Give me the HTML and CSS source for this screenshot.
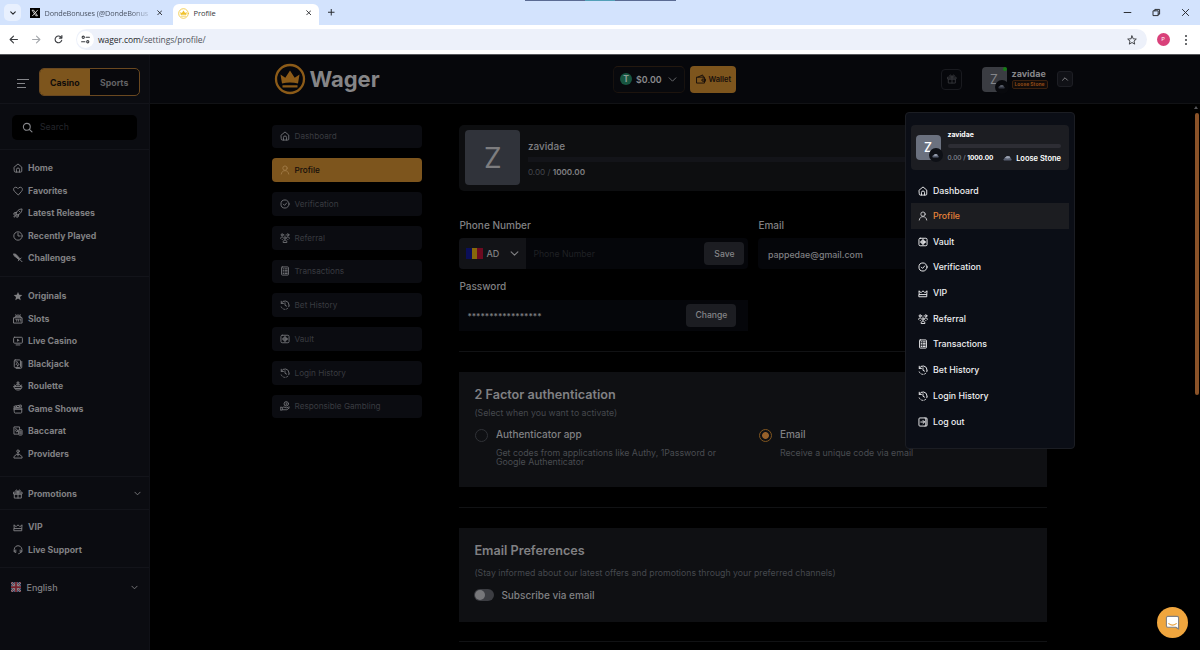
FILE: index.html
```html
<!DOCTYPE html>
<html lang="en">
<head>
  <meta charset="UTF-8" />
  <meta name="viewport" content="width=device-width, initial-scale=1.0" />
  <title>Profile</title>
  <link rel="stylesheet" href="styles.css">
</head>
<body>
  <!-- icon set -->
  <svg class="sprite" aria-hidden="true">
    <symbol id="i-home" viewBox="0 0 16 16"><path d="M2 6.500 8 1.500l6 5V13a1.500 1.500 0 0 1-1.500 1.500h-9A1.500 1.500 0 0 1 2 13z"/><path d="M5.500 14.500V10.500a2.500 2.500 0 0 1 5 0v4"/></symbol>
    <symbol id="i-heart" viewBox="0 0 16 16"><path d="M8 14 2 8.200C-.3 5.500 1.200 2 4.300 2 6 2 7.300 3 8 4.200 8.700 3 10 2 11.700 2c3.100 0 4.600 3.500 2.300 6.200z"/></symbol>
    <symbol id="i-rocket" viewBox="0 0 16 16"><path d="M5 9c1-4 4-7.500 9.500-7.500C14.500 7 11 10 7 11zM5.500 7 2 7.500l-1 2.500 3.500-.5M9 10.500 8.500 14 6 15l.5-3.500M4 11.500c-1.500 0-2.500 1.500-2.500 3 1.500 0 3-1 3-2.500M10 5l1 1"/></symbol>
    <symbol id="i-clock" viewBox="0 0 16 16"><circle cx="8" cy="8" r="6.700"/><path d="M8 3.500V8h3.500"/></symbol>
    <symbol id="i-sword" viewBox="0 0 16 16"><path fill="currentColor" d="M1.500 1.500 4.500 2l6.500 7-1.500 1.500L2 4.500z"/><path d="M8.500 12.500 13 8M11 10.500l3.500 3.500"/></symbol>
    <symbol id="i-star" viewBox="0 0 16 16"><path fill="currentColor" stroke="none" d="m8 1.500 2 4.600 4.900.4-3.700 3.200 1.100 4.900L8 12l-4.300 2.600 1.100-4.900L1.100 6.500 6 6.100z"/></symbol>
    <symbol id="i-slots" viewBox="0 0 16 16"><path d="M1.500 6h13v8.500h-13zM3 6l1-2.500h8L13 6M4.500 8.500h1.500v3M7.500 8.500H9v3M11 8.500h1.500v3M5.500 3.500 4.500 1M8 3.500V1M10.500 3.500l1-2.500"/></symbol>
    <symbol id="i-live" viewBox="0 0 16 16"><rect x="1" y="2" width="14" height="9.500" rx="1.500"/><path d="M5 14.300h6"/><path fill="currentColor" stroke="none" d="m6.500 4.200 4 2.500-4 2.600z"/></symbol>
    <symbol id="i-cards" viewBox="0 0 16 16"><rect x="2" y="1.500" width="10" height="12" rx="1.500"/><path d="M14 4v9a2 2 0 0 1-2 2H5M4.500 4.500h2M5 9c0-2 2-2.200 2-3.500C7 6.800 9.500 7 9.500 9c0 1.200-1.700 1.300-2.200.5L7 11.500"/></symbol>
    <symbol id="i-roulette" viewBox="0 0 16 16"><path d="M1.500 9h13c-.5 3.500-3 5.500-6.500 5.500S2 12.500 1.500 9zM4 9c0-3 2-4 4-4s4 1 4 4M8 1v7M6 3h4M2 6.500l2 1M14 6.500l-2 1M4 12h8"/></symbol>
    <symbol id="i-clap" viewBox="0 0 16 16"><path d="M2 6.500h12V13a1.500 1.500 0 0 1-1.500 1.500h-9A1.500 1.500 0 0 1 2 13zM2 6 1.500 3.800 13 1.500l.5 2.300zM5 3.200l1.500 2M9 2.400l1.500 2M2 8.500h12"/></symbol>
    <symbol id="i-bacc" viewBox="0 0 16 16"><path d="M7.500 13H1.500V1.500h9V4M4 4.500h1M6.500 6 8 8 6 9.500 4.500 8z"/><rect x="9" y="6" width="5.500" height="8.500" rx="1"/><path d="M11 8v4.500M12.700 8v4.500"/></symbol>
    <symbol id="i-joy" viewBox="0 0 16 16"><circle cx="8" cy="3.500" r="2"/><path d="M8 5.500V11M4 10.500H3.500L1.500 12v2.500h13V12l-2-1.500H12M5 8.500h6"/></symbol>
    <symbol id="i-gift" viewBox="0 0 16 16"><path d="M1.500 5h13v3h-13zM2.700 8h10.600v6.500H2.700zM8 5v9.500M8 5C6 5 4 4.200 4.300 2.600 4.700 1 7.300 1.300 8 5c.7-3.700 3.300-4 3.700-2.400C12 4.200 10 5 8 5"/></symbol>
    <symbol id="i-crown" viewBox="0 0 16 16"><path d="M2 10.500 1.500 4.500 5 7.500l3-3 3 3 3.500-3-.5 6M2 10.500h12V14H2z"/></symbol>
    <symbol id="i-support" viewBox="0 0 16 16"><path d="M2.500 10.500a6.300 6.300 0 1 1 11 0c-.7 1.700-2 3-4.500 3.500M4.500 8v4C2.500 12 1.500 11 1.500 9.500M11.500 8v4c2 0 3-1 3-2.500"/></symbol>
    <symbol id="i-user" viewBox="0 0 16 16"><circle cx="8" cy="5" r="3.500"/><path d="M2 14.500c.5-3.500 3-5.500 6-5.500s5.500 2 6 5.500"/></symbol>
    <symbol id="i-check" viewBox="0 0 16 16"><circle cx="8" cy="8" r="6.500"/><path d="m5.300 8.200 2 2 3.500-4"/></symbol>
    <symbol id="i-ref" viewBox="0 0 16 16"><circle cx="3.500" cy="3" r="1.700"/><circle cx="12.500" cy="3" r="1.700"/><circle cx="8" cy="8" r="1.900"/><path d="M1 8.500C1 6.500 2.500 6 4.500 6.500M15 8.500c0-2-1.500-2.500-3.500-2M5 14.500c0-2 1-3 3-3s3 1 3 3zM8 3.300h.1M3.500 10.500h.1M12.500 10.500h.1"/></symbol>
    <symbol id="i-list" viewBox="0 0 16 16"><rect x="2.500" y="1.500" width="11" height="13" rx="1"/><path d="M5 4.500h1M8 4.500h3.500M5 7h1M8 7h3.500M5 9.500h1M8 9.500h3.500M5 12h1M8 12h3.500"/></symbol>
    <symbol id="i-hist" viewBox="0 0 16 16"><path d="M2 5.500A6.500 6.500 0 0 1 14.500 8M2 2v3.500h3.500M8 4.500V8.500l2.500 1.300"/><path stroke-dasharray="2.200 2.800" d="M14.500 8.500a6.500 6.500 0 0 1-13 0"/></symbol>
    <symbol id="i-vault" viewBox="0 0 16 16"><rect x="1.500" y="2" width="13" height="12" rx="2"/><circle cx="8" cy="8" r="3"/><circle cx="8" cy="8" r="1" fill="currentColor"/><path d="M8 3.700V5M8 11v1.300M3.700 8H5M11 8h1.300"/></symbol>
    <symbol id="i-resp" viewBox="0 0 16 16"><circle cx="10" cy="4.500" r="3.500"/><path d="M10 3v3M1 10h2.500v4.500H1zM4 11l2-1.500 4 1.500 4.500-1.500M4 14h7l4-3"/></symbol>
    <symbol id="i-out" viewBox="0 0 16 16"><path d="M10 14.500H3A1.500 1.500 0 0 1 1.500 13V3A1.500 1.500 0 0 1 3 1.500h7M4.500 8h6M8 5.500 10.500 8 8 10.500M10.500 1.500h2.500A1.500 1.500 0 0 1 14.500 3v10a1.500 1.500 0 0 1-1.500 1.500h-2.500M12.500 2v12"/></symbol>
    <symbol id="i-down" viewBox="0 0 16 16"><path d="m2 5 6 6 6-6"/></symbol>
    <symbol id="i-up" viewBox="0 0 16 16"><path d="m3 10.500 5-5 5 5"/></symbol>
    <symbol id="i-x" viewBox="0 0 16 16"><path d="m2 2 12 12M14 2 2 14"/></symbol>
    <symbol id="i-search" viewBox="0 0 16 16"><circle cx="7" cy="7" r="5"/><path d="m11 11 3.500 3.500"/></symbol>
    <symbol id="i-stone" viewBox="0 0 16 10"><path d="M.5 8 3 4.500 7 1.500 11.500 2 15.500 7.500 14.500 9.500 2 9.500z" fill="#596072" stroke="none"/><path d="M3 4.800 7 1.500l4.500.5 1.500 3-5 1z" fill="#99a0af" stroke="none"/></symbol>
    <symbol id="i-logo" viewBox="0 0 32 32"><circle cx="16" cy="16" r="14" stroke-width="2.300"/><path fill="currentColor" stroke="none" d="m6.500 11.500 4.800 3.300L16 7.500l4.700 7.300 4.800-3.300L24 20.500c-5-1.300-11-1.300-16 0zM8.500 22.300h15v2.300h-15z"/></symbol>
  </svg>

  <div class="browser">
    <div class="tabstrip">
      <span class="tab-search"><svg class="ic"><use href="#i-down"/></svg></span>
      <div class="tab tab-x">
        <span class="favicon-x"><svg viewBox="0 0 16 16"><path d="M3 2.500h2.500l7.500 11h-2.500zM13 2.500l-4.300 5M7.300 8.800 3 13.500"/></svg></span>
        <span class="tab-title">DondeBonuses (@DondeBonus</span>
        <svg class="ic close"><use href="#i-x"/></svg>
      </div>
      <div class="tab tab-active">
        <svg class="favicon-w" viewBox="0 0 32 32"><use href="#i-logo"/></svg>
        <span class="tab-title">Profile</span>
        <svg class="ic close"><use href="#i-x"/></svg>
      </div>
      <svg class="plus" viewBox="0 0 16 16"><path d="M8 1v14M1 8h14"/></svg>
      <span class="top-strip"></span>
      <div class="win-controls">
        <svg viewBox="0 0 16 16"><path d="M2 8h12"/></svg>
        <svg viewBox="0 0 16 16"><path d="M2.500 5h8.500v8.500H2.500zM5 5V2.500h8.500V11H11"/></svg>
        <svg viewBox="0 0 16 16"><path d="m2.500 2.500 11 11M13.500 2.500l-11 11"/></svg>
      </div>
    </div>
    <div class="toolbar">
      <svg viewBox="0 0 16 16"><path d="M15 8H2M8 2 2 8l6 6"/></svg>
      <svg class="off" viewBox="0 0 16 16"><path d="M1 8h13M8 2l6 6-6 6"/></svg>
      <svg viewBox="0 0 16 16"><path d="M13.700 9.500A6 6 0 1 1 13 4.500M14 1v4.500H9.500"/></svg>
      <div class="address">
        <span class="site-info"><svg viewBox="0 0 16 16"><path d="M9 4h6M1 12h6"/><circle cx="4" cy="4" r="2"/><circle cx="12" cy="12" r="2"/></svg></span>
        <span class="url">wager.com<i>/settings/profile/</i></span>
        <svg class="fav" viewBox="0 0 16 16"><path d="m8 1.500 2 4.600 4.900.4-3.700 3.200 1.100 4.900L8 12l-4.300 2.600 1.100-4.900L1.100 6.500 6 6.100z"/></svg>
      </div>
      <span class="me">P</span>
      <span class="dots"><b></b><b></b><b></b></span>
    </div>
  </div>

  <div class="page">
    <aside class="sidebar">
      <div class="side-top">
        <span class="burger"><b></b><b></b><b></b></span>
        <div class="switch"><span class="on">Casino</span><span>Sports</span></div>
      </div>
      <div class="side-search">
        <div class="search-box"><svg class="ic"><use href="#i-search"/></svg><span>Search</span></div>
      </div>
      <nav class="side-group first">
        <a><svg class="ic"><use href="#i-home"/></svg>Home</a>
        <a><svg class="ic"><use href="#i-heart"/></svg>Favorites</a>
        <a><svg class="ic"><use href="#i-rocket"/></svg>Latest Releases</a>
        <a><svg class="ic"><use href="#i-clock"/></svg>Recently Played</a>
        <a><svg class="ic"><use href="#i-sword"/></svg>Challenges</a>
      </nav>
      <nav class="side-group games">
        <a><svg class="ic"><use href="#i-star"/></svg>Originals</a>
        <a><svg class="ic"><use href="#i-slots"/></svg>Slots</a>
        <a><svg class="ic"><use href="#i-live"/></svg>Live Casino</a>
        <a><svg class="ic"><use href="#i-cards"/></svg>Blackjack</a>
        <a><svg class="ic"><use href="#i-roulette"/></svg>Roulette</a>
        <a><svg class="ic"><use href="#i-clap"/></svg>Game Shows</a>
        <a><svg class="ic"><use href="#i-bacc"/></svg>Baccarat</a>
        <a><svg class="ic"><use href="#i-joy"/></svg>Providers</a>
      </nav>
      <nav class="side-group promo">
        <a><svg class="ic"><use href="#i-gift"/></svg>Promotions<svg class="ic arrow"><use href="#i-down"/></svg></a>
      </nav>
      <nav class="side-group help">
        <a><svg class="ic"><use href="#i-crown"/></svg>VIP</a>
        <a><svg class="ic"><use href="#i-support"/></svg>Live Support</a>
      </nav>
      <div class="lang">
        <svg class="uk" viewBox="0 0 20 20"><path fill="#1d2850" stroke="none" d="M0 0h20v20H0z"/><path d="m0 0 20 20M20 0 0 20" stroke="#8d8d90" stroke-width="4"/><path d="m0 0 20 20M20 0 0 20" stroke="#75202c" stroke-width="1.500"/><path d="M10 0v20M0 10h20" stroke="#8d8d90" stroke-width="6"/><path d="M10 0v20M0 10h20" stroke="#75202c" stroke-width="3.500"/></svg>
        English
        <svg class="ic arrow"><use href="#i-down"/></svg>
      </div>
    </aside>

    <div class="main">
      <header class="header">
        <div class="logo"><svg viewBox="0 0 32 32"><use href="#i-logo"/></svg>Wager</div>
        <div class="balance">
          <span class="coin">T</span>$0.00<svg class="ic"><use href="#i-down"/></svg>
        </div>
        <div class="wallet">
          <svg viewBox="0 0 16 16"><path d="M1.500 5h12v9.500h-12zM3 5l7.500-3.500L12 5M14.500 8H11a1.800 1.800 0 0 0 0 3.600h3.500zM11 9.800h.3"/></svg>Wallet
        </div>
        <span class="gift-btn"><svg class="ic"><use href="#i-gift"/></svg></span>
        <div class="avatar small">Z<span class="online"></span><span class="rank"><svg><use href="#i-stone"/></svg></span></div>
        <div class="who">zavidae<span class="tag">Loose Stone</span></div>
        <span class="up-btn"><svg class="ic"><use href="#i-up"/></svg></span>
      </header>

      <div class="content">
        <nav class="settings-nav">
          <a><svg class="ic"><use href="#i-home"/></svg>Dashboard</a>
          <a class="active"><svg class="ic"><use href="#i-user"/></svg>Profile</a>
          <a><svg class="ic"><use href="#i-check"/></svg>Verification</a>
          <a><svg class="ic"><use href="#i-ref"/></svg>Referral</a>
          <a><svg class="ic"><use href="#i-list"/></svg>Transactions</a>
          <a><svg class="ic"><use href="#i-hist"/></svg>Bet History</a>
          <a><svg class="ic"><use href="#i-vault"/></svg>Vault</a>
          <a><svg class="ic"><use href="#i-hist"/></svg>Login History</a>
          <a><svg class="ic"><use href="#i-resp"/></svg>Responsible Gambling</a>
        </nav>

        <div class="settings">
          <section class="level-card">
            <div class="avatar big">Z</div>
            <div class="level">
              <div class="name">zavidae</div>
              <div class="bar"></div>
              <div class="points">0.00 / <b>1000.00</b></div>
            </div>
          </section>

          <div class="fields">
            <div class="field">
              <label>Phone Number</label>
              <div class="input">
                <div class="country"><span class="flag-ad"></span>AD<svg class="ic"><use href="#i-down"/></svg></div>
                <span class="placeholder">Phone Number</span>
                <button class="save">Save</button>
              </div>
            </div>
            <div class="field">
              <label>Email</label>
              <div class="input"><span class="value">pappedae@gmail.com</span></div>
            </div>
            <div class="field">
              <label>Password</label>
              <div class="input square">
                <span class="stars">*****************</span>
                <button class="change">Change</button>
              </div>
            </div>
          </div>

          <section class="panel twofa">
            <h2>2 Factor authentication</h2>
            <p class="hint">(Select when you want to activate)</p>
            <div class="options">
              <div class="option">
                <span class="radio"></span>
                <div><h3>Authenticator app</h3><p>Get codes from applications like Authy, 1Password or Google Authenticator</p></div>
              </div>
              <div class="option">
                <span class="radio checked"></span>
                <div><h3>Email</h3><p>Receive a unique code via email</p></div>
              </div>
            </div>
          </section>

          <section class="panel prefs">
            <h2>Email Preferences</h2>
            <p class="hint">(Stay informed about our latest offers and promotions through your preferred channels)</p>
            <div class="subscribe"><span class="toggle"></span>Subscribe via email</div>
          </section>
          <div class="end-line"></div>
        </div>
      </div>
    </div>
  </div>

  <!-- account menu -->
  <div class="menu">
    <div class="menu-head">
      <div class="avatar mini">Z<span class="rank"><svg><use href="#i-stone"/></svg></span></div>
      <div class="menu-level">
        <div class="name">zavidae</div>
        <div class="bar"></div>
        <div class="row"><span>0.00 / <b>1000.00</b></span><span class="stone"><svg><use href="#i-stone"/></svg>Loose Stone</span></div>
      </div>
    </div>
    <a><svg class="ic"><use href="#i-home"/></svg>Dashboard</a>
    <a class="active"><svg class="ic"><use href="#i-user"/></svg>Profile</a>
    <a><svg class="ic"><use href="#i-vault"/></svg>Vault</a>
    <a><svg class="ic"><use href="#i-check"/></svg>Verification</a>
    <a><svg class="ic"><use href="#i-crown"/></svg>VIP</a>
    <a><svg class="ic"><use href="#i-ref"/></svg>Referral</a>
    <a><svg class="ic"><use href="#i-list"/></svg>Transactions</a>
    <a><svg class="ic"><use href="#i-hist"/></svg>Bet History</a>
    <a><svg class="ic"><use href="#i-hist"/></svg>Login History</a>
    <a class="logout"><svg class="ic"><use href="#i-out"/></svg>Log out</a>
  </div>

  <div class="scroll-up"></div>
  <div class="scrollbar"></div>
  <div class="chat"><svg viewBox="0 0 16 16"><path d="M3 1.500h10A1.500 1.500 0 0 1 14.500 3v12L11.500 13H3a1.500 1.500 0 0 1-1.500-1.500V3A1.500 1.500 0 0 1 3 1.500z" fill="#fff"/><path d="M4 9.200c2.400 1.900 5.600 1.900 8 0" stroke="#e9a03b"/></svg></div>
</body>
</html>
```
FILE: styles.css
```css
* { box-sizing: border-box; margin: 0; padding: 0; }
body {
  width: 1200px;
  height: 650px;
  overflow: hidden;
  position: relative;
  background: #000;
  color: #808083;
  font-family: Inter, "Liberation Sans", sans-serif;
  font-size: 8.75px;
}
svg {
  fill: none;
  stroke: currentColor;
  stroke-width: 1.5;
  stroke-linecap: round;
  stroke-linejoin: round;
  flex: none;
}
.sprite { position: absolute; width: 0; height: 0; }
.ic { width: 10px; height: 10px; }

/* browser */
.browser { font-family: "Open Sans", "Noto Sans", sans-serif; color: #26282c; }
.tabstrip {
  display: flex;
  align-items: center;
  height: 25px;
  background: #d3e3fd;
  padding-left: 4px;
}
.tab-search {
  width: 17px;
  height: 17px;
  border-radius: 5px;
  background: #e8f0fe;
  display: flex;
  align-items: center;
  justify-content: center;
}
.tab-search .ic { width: 6px; height: 6px; stroke-width: 3; }
.tab { display: flex; align-items: center; font-size: 7.5px; letter-spacing: -.05px; }
.tab-x { width: 152px; padding: 0 11px 0 9px; color: #4c5565; }
.tab-active {
  align-self: flex-end;
  width: 146px;
  height: 21px;
  padding: 0 8px 3px 5px;
  border-radius: 6px 6px 0 0;
  background: #fff;
  color: #33363b;
}
.tab-title { flex: 1; white-space: nowrap; margin: 0 9px 0 4.5px; }
.tab-x .tab-title { font-size: 7.3px; letter-spacing: -.12px; margin-right: 7px; -webkit-mask-image: linear-gradient(90deg, #000 82%, rgba(0,0,0,.15)); mask-image: linear-gradient(90deg, #000 82%, rgba(0,0,0,.15)); }
.favicon-x { width: 10px; height: 10px; background: #000; color: #fff; display: flex; align-items: center; justify-content: center; }
.favicon-x svg { width: 8px; height: 8px; }
.favicon-w { width: 11px; height: 11px; color: #f0c22e; }
.close { width: 5.5px; height: 5.5px; stroke-width: 2.6; color: #26282c; }
.plus { width: 6.5px; height: 6.5px; margin-left: 9px; stroke-width: 2.4; }
.top-strip {
  align-self: flex-start;
  width: 151px;
  height: 1px;
  margin-left: 190px;
  background: linear-gradient(90deg, #5b6b93 60px, #53a0b8 60px, #53a0b8 90px, #5b6b93 90px);
}
.win-controls { margin-left: auto; margin-right: 10px; display: flex; gap: 20px; }
.win-controls svg { width: 9px; height: 9px; stroke-width: 1.7; }
.toolbar {
  display: flex;
  align-items: center;
  height: 30px;
  background: #fff;
  border-bottom: 1px solid #55565a;
  padding-left: 9px;
  color: #3a3c40;
}
.toolbar > svg { width: 9px; height: 9px; margin-right: 13.5px; stroke-width: 2; }
.toolbar > svg.off { color: #a5a8ad; }
.address {
  flex: none;
  display: flex;
  align-items: center;
  width: 1071px;
  height: 21px;
  margin-left: -1px;
  border-radius: 11px;
  background: #edf1fa;
  padding: 0 10px 0 1px;
}
.site-info { width: 17px; height: 17px; border-radius: 50%; background: #fff; display: flex; align-items: center; justify-content: center; }
.site-info svg { width: 9px; height: 9px; stroke-width: 1.8; }
.url { margin-left: 4.5px; font-size: 8.5px; letter-spacing: -.07px; color: #26282c; }
.url i { font-style: normal; color: #50545b; }
.fav { width: 10px; height: 10px; margin-left: auto; }
.me {
  width: 13px; height: 13px; margin-left: 10px; border-radius: 50%;
  background: #d9417a; color: #fff; font-size: 6px; line-height: 13px; text-align: center;
}
.dots { display: flex; flex-direction: column; gap: 2px; margin-left: 15px; }
.dots b { width: 2px; height: 2px; border-radius: 50%; background: #3a3c40; }

/* page */
.page { display: flex; height: 595px; }
.sidebar { width: 150px; flex: none; background: #0b0c11; font-weight: 700; letter-spacing: -.02px; border-right: 1px solid #101117; }
.side-top { display: flex; align-items: center; height: 49px; padding: 6px 0 0 17px; border-bottom: 1px solid #13141a; }
.burger { width: 12px; display: flex; flex-direction: column; gap: 3px; margin: 2px 10px 0 0; }
.burger b { height: 1px; background: #85868a; }
.burger b:nth-child(2) { width: 8px; }
.burger b:nth-child(3) { width: 9px; }
.switch { display: flex; width: 101px; height: 28px; border: 1px solid #6a4820; border-radius: 5px; overflow: hidden; background: #08080c; }
.switch span { flex: 1; line-height: 28px; text-align: center; color: #626265; }
.switch .on { background: #7d551d; color: #100c0a; }
.side-search { height: 46px; padding: 10.5px 0 0 12px; border-bottom: 1px solid #13141a; }
.search-box { display: flex; align-items: center; gap: 7px; width: 125px; height: 25px; padding-left: 10px; border-radius: 5px; background: #000; color: #24262c; font-weight: 400; }
.search-box .ic { color: #85868a; stroke-width: 1.6; width: 11px; height: 11px; }
.side-group { border-bottom: 1px solid #13141a; padding: 7px 8px 6.5px 13px; }
.side-group a { display: flex; align-items: center; height: 22.5px; gap: 5px; }
.side-group.games { padding: 8px 8px 11px 13px; }
.side-group.promo { padding: 5.5px 8px 4px 13px; }
.side-group.help { padding: 6px 8px 6px 13px; }
.sidebar .arrow { margin-left: auto; width: 7px; height: 7px; stroke-width: 2; }
.lang { display: flex; align-items: center; height: 38px; padding: 0 11px 0 10.5px; font-weight: 500; font-size: 9px; }
.uk { width: 10px; height: 10px; margin-right: 6px; overflow: hidden; }

.main { flex: 1; display: flex; flex-direction: column; }
.header { display: flex; align-items: center; height: 49px; padding: 0 0 0 124px; background: #06070b; border-bottom: 1px solid #111215; }
.logo { display: flex; align-items: center; gap: 3.5px; width: 339px; color: #858587; font-size: 22px; font-weight: 700; letter-spacing: -.05px; }
.logo svg { width: 32px; height: 32px; color: #8c5b18; }
.balance {
  display: flex; align-items: center; width: 72px; height: 27px; padding-left: 6px;
  border: 1px solid #17120f; border-top-color: #23180f; border-bottom-color: #1d140e; border-radius: 5px;
  background: #08090d; color: #8b8b8e; font-weight: 600; font-size: 8.9px;
}
.coin { width: 12px; height: 12px; margin-right: 4px; border-radius: 50%; background: #175540; color: #8d9b96; line-height: 12px; text-align: center; font-weight: 700; font-size: 8.5px; }
.balance .ic { width: 9px; height: 9px; margin-left: 6px; stroke-width: 1.7; color: #6c6d70; }
.wallet { display: flex; align-items: center; gap: 3px; width: 46px; height: 27px; margin-left: 5px; padding-left: 5.5px; border-radius: 4px; background: #7d551d; color: #170f0b; font-size: 7.5px; font-weight: 600; }
.wallet svg { width: 10px; height: 10px; }
.gift-btn { display: flex; align-items: center; justify-content: center; width: 21px; height: 21px; margin-left: 205px; border: 1px solid #191a1f; border-radius: 4px; color: #34353a; }
.avatar { position: relative; display: flex; align-items: center; justify-content: center; border-radius: 4px; background: #3a3c42; color: #85868a; flex: none; }
.avatar.small { width: 25px; height: 25px; margin-left: 19.5px; font-size: 12.5px; }
.avatar.big { width: 55px; height: 55px; font-size: 28px; background: #30333a; color: #7d7d7f; }
.avatar.mini { width: 25px; height: 25px; font-size: 12.5px; background: #6b717f; color: #fff; font-weight: 500; }
.online { position: absolute; right: 0; top: 0; width: 4px; height: 4px; border-radius: 50%; background: #167c16; }
.rank { position: absolute; left: 13px; top: 13px; width: 14px; height: 14px; border-radius: 50%; background: #0e1016; display: flex; align-items: center; justify-content: center; }
.rank svg { width: 7px; height: 5px; }
.small .rank { background: #08090d; }
.small .rank svg { opacity: .55; }
.who { margin-left: 5px; width: 36px; color: #858588; font-weight: 700; font-size: 9px; line-height: 10px; }
.tag { display: block; margin-top: 1px; height: 9px; border: 1px solid #3b210f; border-radius: 2px; background: #120c0a; color: #8c4816; font-size: 5px; line-height: 7px; text-align: center; white-space: nowrap; }
.up-btn { display: flex; align-items: center; justify-content: center; width: 16px; height: 16px; margin-left: 9px; border: 1px solid #1d1e24; border-radius: 3px; background: #101116; }
.up-btn .ic { width: 8px; height: 8px; stroke-width: 2; }

.content { display: flex; gap: 37.4px; padding: 20.5px 0 0 122px; }
.settings-nav { width: 150px; display: flex; flex-direction: column; gap: 10px; }
.settings-nav a { display: flex; align-items: center; gap: 5px; height: 23.75px; padding-left: 7.5px; border-radius: 4px; background: #0b0c11; color: #393b40; font-size: 8.2px; }
.settings-nav .ic { color: #707175; width: 10px; height: 10px; }
.settings-nav .active { background: #7d551d; color: #140d0a; font-weight: 500; }
.settings-nav .active .ic { color: #a07a45; }
.settings { width: 588px; }
.level-card { display: flex; align-items: center; height: 66.5px; padding: 0 0 0 6px; border-radius: 5px; background: #0d0e10; }
.level { flex: 1; margin: 2px 0 0 7.5px; }
.level .name { font-size: 10px; line-height: 12px; font-weight: 500; }
.level .bar { height: 5px; margin: 5px 0 5.5px; background: #131419; }
.points { font-size: 8.15px; line-height: 11px; color: #44474d; }
.points b { color: #808083; font-weight: 600; }
.fields { display: grid; grid-template-columns: 289px 289px; column-gap: 10px; row-gap: 10px; padding: 26.5px 0 20px; border-bottom: 1px solid #111214; }
.field label { display: block; height: 20.5px; font-size: 10px; line-height: 14px; font-weight: 500; }
.input { display: flex; align-items: center; height: 31.3px; border-radius: 4px; overflow: hidden; background: #05060a; padding-right: 4px; font-weight: 500; }
.input.square { border-radius: 0; padding-right: 12px; }
.country { display: flex; align-items: center; width: 66.5px; height: 100%; padding-left: 7px; background: #121317; font-size: 9px; }
.flag-ad { width: 17px; height: 11px; margin-right: 3px; background: linear-gradient(90deg, #0b0f59 33%, #86680c 33% 66%, #6d0a20 66%); }
.country .ic { width: 9px; height: 9px; margin-left: auto; margin-right: 7px; stroke-width: 2; }
.placeholder { margin-left: 7.5px; padding-top: 1px; color: #1f2024; font-size: 8.75px; letter-spacing: -.03px; font-weight: 400; }
.value { margin-left: 9.5px; padding-top: 1px; font-size: 8.8px; letter-spacing: .03px; }
.stars { margin-left: 8px; padding-top: 3px; font-size: 8.4px; }
.input button { margin-left: auto; height: 22.5px; border: 0; border-radius: 4px; background: #1c1d22; color: #858588; font: 500 8.6px Inter, sans-serif; }
.input .save { width: 40px; }
.input .change { width: 50px; }
.panel { position: relative; margin-top: 20.2px; padding: 15px; background: #0f1013; }
.twofa { height: 115px; }
.prefs { height: 93.5px; margin-top: 41px; }
.prefs::before { content: ""; position: absolute; left: 0; right: 0; top: -21px; height: 1px; background: #111214; }
.end-line { height: 1px; margin-top: 19.5px; background: #111214; }
.panel h2 { font-size: 12.65px; line-height: 15px; font-weight: 600; }
.hint { margin-top: 6px; color: #45484e; font-size: 8.75px; line-height: 11px; }
.options { display: grid; grid-template-columns: 284px 1fr; margin-top: 9px; }
.option { display: flex; gap: 8px; }
.radio { width: 13px; height: 13px; margin: 1px 0 0 .5px; border: 1.3px solid #303237; border-radius: 50%; flex: none; }
.radio.checked { border-color: #80551f; background: radial-gradient(#97612a 0 3px, transparent 3.8px); }
.option h3 { font-size: 10px; line-height: 13px; font-weight: 500; }
.option p { width: 236px; margin-top: 6.5px; color: #494c51; font-size: 8.8px; line-height: 9px; }
.prefs .hint { margin-top: 10px; }
.subscribe { display: flex; align-items: center; gap: 7px; margin-top: 9.5px; font-size: 10px; font-weight: 500; }
.toggle { width: 20px; height: 12px; border-radius: 6px; background: #3c3d42; }
.toggle::before { content: ""; display: block; width: 10px; height: 10px; margin: 1px; border-radius: 50%; background: #77777a; }

/* account menu */
.menu { position: absolute; left: 905px; top: 112px; width: 170px; height: 337px; padding: 12px 5px; border: 1px solid #1b1d23; border-radius: 4px; background: #0b0e16; color: #f0f0f2; font-weight: 500; }
.menu-head { display: flex; align-items: center; height: 45px; margin-bottom: 7.7px; padding: 0 8px 0 4.5px; border-radius: 4px; background: #1c1d22; }
.menu-level { flex: 1; margin: -2px 0 0 7px; font-size: 6.4px; line-height: 9px; color: #858992; }
.menu-level .name { color: #fff; font-weight: 700; font-size: 6.9px; }
.menu-level .bar { height: 4px; margin: 4.5px 0 5.5px; border-radius: 2px; background: #2d2d34; }
.menu-level .row { display: flex; justify-content: space-between; align-items: center; height: 10px; white-space: nowrap; }
.menu-level b { color: #fff; font-weight: 700; }
.stone { display: flex; align-items: center; gap: 4px; color: #fff; font-size: 7.5px; font-weight: 600; }
.stone svg { width: 9px; height: 6px; }
.menu a { display: flex; align-items: center; gap: 5px; height: 25.65px; padding-left: 7px; }
.menu .active { background: #1c1d21; color: #e8833a; }
.menu .active .ic { color: #c9c9cc; }
.menu .logout { margin-top: 1px; }

.scroll-up { position: absolute; right: 2px; top: 106px; border: 2px solid transparent; border-top: 0; border-bottom: 3px solid #55565a; }
.scrollbar { position: absolute; right: 1px; top: 113px; width: 4px; height: 282px; border-radius: 2px; background: #8a5228; }
.chat { position: absolute; left: 1157px; top: 607px; width: 31px; height: 31px; border-radius: 50%; background: #f0a63e; display: flex; align-items: center; justify-content: center; }
.chat svg { width: 15px; height: 15px; stroke-width: 1.2; }
```
